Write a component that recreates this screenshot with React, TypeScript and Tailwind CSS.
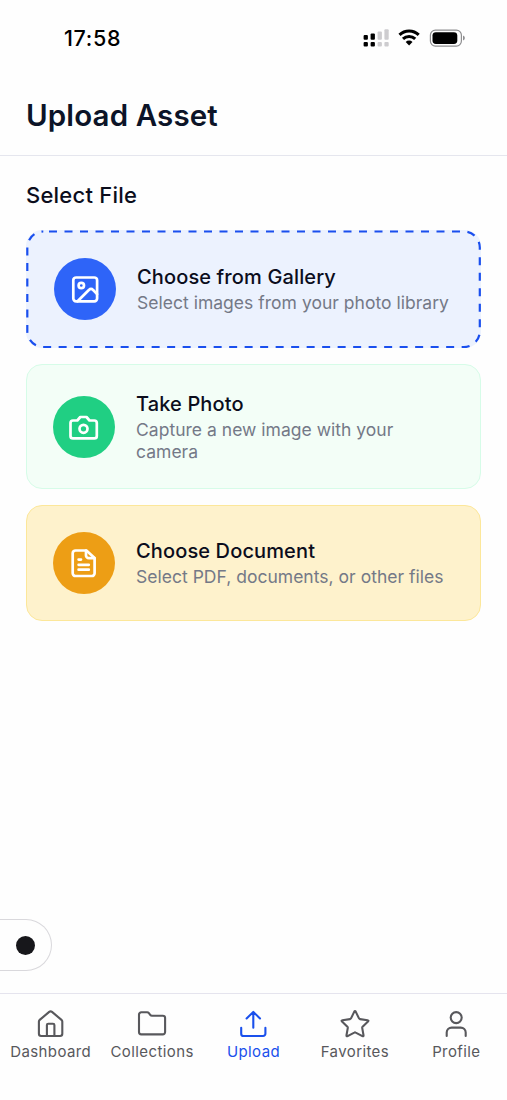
import type { ReactNode } from "react";

const stroke = {
  fill: "none",
  stroke: "currentColor",
  strokeLinecap: "round" as const,
  strokeLinejoin: "round" as const,
};

function StatusIcons() {
  return (
    <svg width="104" height="20" viewBox="0 0 104 20" aria-hidden="true">
      <g fill="#000">
        <rect x="0.6" y="7" width="4.3" height="4.8" rx="1" />
        <rect x="7.6" y="5.4" width="4.3" height="6.4" rx="1" />
        <rect x="0.6" y="14" width="4.3" height="4.4" rx="1" />
        <rect x="7.6" y="14" width="4.3" height="4.4" rx="1" />
      </g>
      <g fill="#cdcccf">
        <rect x="14.6" y="3.4" width="4.3" height="8.4" rx="1" />
        <rect x="21.4" y="1.2" width="4.3" height="10.6" rx="1" />
        <rect x="14.6" y="14" width="4.3" height="4.4" rx="1" />
        <rect x="21.4" y="14" width="4.3" height="4.4" rx="1" />
      </g>
      <g fill="none" stroke="#000" strokeWidth="3">
        <path d="M36.5 6.9a13.5 13.5 0 0 1 19.2 0" />
        <path d="M40 10.9a8.7 8.7 0 0 1 12.2 0" />
      </g>
      <path d="M42.7 13.9a4.9 4.9 0 0 1 6.8 0L46.1 17.5z" fill="#000" />
      <rect x="67.4" y="2.1" width="31" height="16" rx="5" fill="none" stroke="#8e8e90" strokeWidth="1.2" />
      <rect x="69.5" y="4.2" width="24.8" height="11.8" rx="3.4" fill="#000" />
      <path d="M100 7.6q1.9.8 1.9 2.5T100 12.6z" fill="#8e8e90" />
    </svg>
  );
}

function ImageIcon() {
  return (
    <svg width="30" height="30" viewBox="0 0 30 30" {...stroke} strokeWidth="2.7">
      <rect x="3.3" y="3.5" width="23.8" height="23.8" rx="2.8" />
      <circle cx="11.3" cy="11.5" r="2.7" />
      <path d="M7.6 27.3 19.1 15.8a2.6 2.6 0 0 1 3.8 0l4.2 4.3" />
    </svg>
  );
}

function CameraIcon() {
  return (
    <svg width="30" height="30" viewBox="0 0 30 30" {...stroke} strokeWidth="2.7">
      <g transform="translate(-0.6 0.3)">
        <path d="M18.1 4.7h-6.2L8.9 8.2H4.6A2.5 2.5 0 0 0 2.1 10.7v12.9a2.5 2.5 0 0 0 2.5 2.5h21.3a2.5 2.5 0 0 0 2.5-2.5V10.7a2.5 2.5 0 0 0-2.5-2.5h-4.8z" />
        <circle cx="15.1" cy="16.5" r="4" />
      </g>
    </svg>
  );
}

function DocumentIcon() {
  return (
    <svg width="30" height="30" viewBox="0 0 30 30" {...stroke} strokeWidth="2.7">
      <g transform="translate(-0.4 0.2)">
        <path d="M17.8 2.3H6.9a2.8 2.8 0 0 0-2.8 2.8v19.9a2.8 2.8 0 0 0 2.8 2.8h16.3a2.8 2.8 0 0 0 2.8-2.8V9.9z" />
        <path d="M17.4 2.4v4.8a2.8 2.8 0 0 0 2.8 2.8h5.6M10 11.4h2.4M10 16.6h10.2M10 21.5h10.2" />
      </g>
    </svg>
  );
}

type OptionProps = {
  icon: ReactNode;
  title: string;
  text: string;
  card: string;
  circle: string;
  outline?: ReactNode;
};

function Option({ icon, title, text, card, circle, outline }: OptionProps) {
  return (
    <button className={`relative flex w-full items-center rounded-[16px] text-left ${card}`}>
      {outline}
      <span className={`flex size-[62px] shrink-0 items-center justify-center rounded-full text-white ${circle}`}>
        {icon}
      </span>
      <span className="ml-[21px] flex flex-1 flex-col gap-[2px]">
        <span className="text-[20px] leading-[26px] font-medium tracking-[0.13px] text-[#0b0d1c]">{title}</span>
        <span className="text-[17.5px] leading-[22px] tracking-[0.02px] text-[#747987]">{text}</span>
      </span>
    </button>
  );
}

function DashedOutline() {
  return (
    <svg className="absolute inset-0" width="455" height="118" viewBox="0 0 455 118" aria-hidden="true">
      <rect
        x="1.3" y="1.5" width="452.5" height="115.6" rx="16"
        fill="none" stroke="#1a4fee" strokeWidth="2.2" strokeDasharray="8 7.5" strokeDashoffset="-5.7"
      />
    </svg>
  );
}

const tabs = ["Dashboard", "Collections", "Upload", "Favorites", "Profile"];

function TabIcon({ name }: { name: string }) {
  return (
    <svg width="30" height="30" viewBox="0 0 30 30" {...stroke} strokeWidth="2.1">
      {name === "Dashboard" && (
        <>
          <path d="M2.9 12.6q0-1 .8-1.7l9.5-8a2.2 2.2 0 0 1 2.8 0l9.5 8q.8.7.8 1.7v12.2a2.2 2.2 0 0 1-2.2 2.2H5.1a2.2 2.2 0 0 1-2.2-2.2z" />
          <path d="M10.9 27V16.1a1.4 1.4 0 0 1 1.4-1.4h4.7a1.4 1.4 0 0 1 1.4 1.4V27" />
        </>
      )}
      {name === "Collections" && (
        <path d="M4.3 3.3h5.8q1.1 0 1.8.9l1.3 1.7q.7.9 1.8.9h10.8a2.3 2.3 0 0 1 2.3 2.3v14a2.3 2.3 0 0 1-2.3 2.3H4.3A2.3 2.3 0 0 1 2 23.1V5.6a2.3 2.3 0 0 1 2.3-2.3z" />
      )}
      {name === "Upload" && (
        <path d="M3.2 18.7v6a2.3 2.3 0 0 0 2.3 2.3h19.6a2.3 2.3 0 0 0 2.3-2.3v-6M8.6 9.4l6.7-6.5L22 9.4M15.3 3.2v15.5" />
      )}
      {name === "Favorites" && (
        <path d="m14.3 2.6q.7-1.3 1.4 0l3.3 6.8q.3.6 1 .7l7.6 1.1q1.4.2.4 1.3l-5.4 5.2q-.5.5-.4 1.2l1.3 7.4q.2 1.4-1.1.8l-6.7-3.5q-.7-.4-1.4 0l-6.7 3.5q-1.3.6-1.1-.8l1.3-7.4q.1-.7-.4-1.2L2 12.5q-1-1.1.4-1.3L10 10.1q.7-.1 1-.7z" />
      )}
      {name === "Profile" && (
        <>
          <circle cx="15.2" cy="8.6" r="5.5" />
          <path d="M5.7 27v-3.4a5 5 0 0 1 5-5h9a5 5 0 0 1 5 5V27" />
        </>
      )}
    </svg>
  );
}

export default function App() {
  return (
    <div className="flex h-[1100px] w-[507px] flex-col overflow-hidden bg-[#fefefe] font-['Inter','Liberation_Sans',sans-serif]">
      <header className="h-[156px] shrink-0 border-b border-[#e5e6ee]">
        <div className="flex h-[76px] items-center justify-between pr-[40px] pl-[64px]">
          <span className="text-[21.5px] leading-6 font-medium tracking-[0.65px] text-black">17:58</span>
          <StatusIcons />
        </div>
        <h1 className="px-[26px] pt-[21px] text-[29.5px] leading-9 font-semibold tracking-[0.12px] text-[#0c1428]">Upload Asset</h1>
      </header>

      <main className="flex flex-1 flex-col px-[26px] pt-[25px]">
        <h2 className="text-[22px] leading-7 font-medium tracking-[0.22px] text-[#0b0d1c]">Select File</h2>
        <div className="mt-[21px] flex flex-col">
          <Option
            card="h-[118px] bg-[#ecf2fe] pl-[28px]"
            circle="bg-[#2e64f8]"
            icon={<ImageIcon />}
            title="Choose from Gallery"
            text="Select images from your photo library"
            outline={<DashedOutline />}
          />
          <Option
            card="mt-4 h-[125px] border border-[#d6fce8] bg-[#f3fef7] pr-[50px] pl-[26px]"
            circle="bg-[#20cf83]"
            icon={<CameraIcon />}
            title="Take Photo"
            text="Capture a new image with your camera"
          />
          <Option
            card="mt-4 h-[116px] border border-[#fce79a] bg-[#fef2cc] pl-[26px]"
            circle="bg-[#ed9e15]"
            icon={<DocumentIcon />}
            title="Choose Document"
            text="Select PDF, documents, or other files"
          />
        </div>
        <div className="mt-auto mb-[22px] -ml-[26px] flex h-[52px] w-[52px] items-center rounded-r-full border border-l-0 border-[#d9d8dc] bg-[#fefefe] pl-[16px]">
          <span className="size-[19px] rounded-full bg-[#17171b]" />
        </div>
      </main>

      <nav className="grid h-[107px] shrink-0 grid-cols-5 border-t border-[#e5e4ee]">
        {tabs.map((label) => (
          <button
            key={label}
            className={`flex flex-col items-center pt-[15px] ${label === "Upload" ? "text-[#1a50ec]" : "text-[#58585c]"}`}
          >
            <TabIcon name={label} />
            <span className="mt-[3px] text-[15px] leading-5 tracking-[0.4px] whitespace-nowrap">{label}</span>
          </button>
        ))}
      </nav>
    </div>
  );
}
